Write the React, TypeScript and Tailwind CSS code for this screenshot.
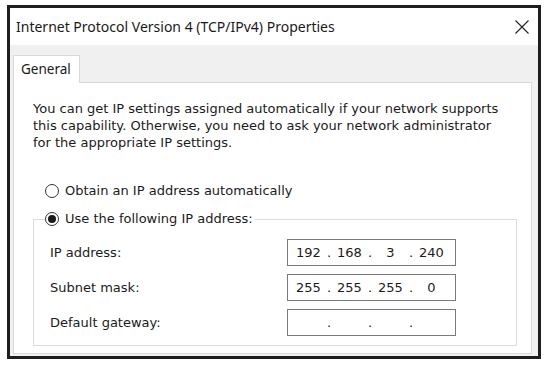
import React from "react";

type Octets = [string, string, string, string];

// Windows-style radio button.
function Radio({ checked, label }: { checked?: boolean; label: string }) {
  return (
    <div className="flex items-center h-[20px]">
      <span className="flex items-center justify-center w-[14px] h-[14px] rounded-full border border-[#333333] bg-white">
        {checked && <span className="w-[8px] h-[8px] rounded-full bg-[#1a1a1a]" />}
      </span>
      <span className="ml-[6px] text-[13px] text-[#1b1b1b]">{label}</span>
    </div>
  );
}

// IP address control: four centred octet fields split by dots.
function IpBox({ value }: { value: Octets }) {
  return (
    <div className="flex items-center w-[169px] h-[27px] border border-[#7a7a7a] bg-white pl-[2px] text-[13px] text-[#1b1b1b]">
      {value.map((o, i) => (
        <React.Fragment key={i}>
          <span className="w-[37px] text-center">{o}</span>
          {i < 3 && <span className="w-[4px] text-center">.</span>}
        </React.Fragment>
      ))}
    </div>
  );
}

function Row({ label, value }: { label: string; value: Octets }) {
  return (
    <div className="flex items-center">
      <span className="w-[253px] pl-[16px] text-[13px] text-[#1b1b1b]">{label}</span>
      <IpBox value={value} />
    </div>
  );
}

export default function App() {
  return (
    <div
      className="w-[553px] h-[366px] bg-white overflow-hidden pt-[5px] pl-[7px]"
      style={{ fontFamily: '"DejaVu Sans", Tahoma, sans-serif' }}
    >
      <div className="w-[534px] h-[354px] border-[3px] border-[#1e1e1e] bg-[#f0f0f0] flex flex-col">
        {/* title bar */}
        <div className="h-[37px] bg-white flex items-center justify-between pl-[6px] pr-[9px] shrink-0">
          <span
            className="text-[14px] text-[#1a1a1a]"
            style={{ fontFamily: '"Noto Sans", "Open Sans", sans-serif' }}
          >
            Internet Protocol Version 4 (TCP/IPv4) Properties
          </span>
          <svg width="14" height="14" viewBox="0 0 14 14" className="mt-[1px]">
            <path d="M0.5 0.5 L13.5 13.5 M13.5 0.5 L0.5 13.5" stroke="#222" strokeWidth="1.1" fill="none" />
          </svg>
        </div>

        {/* tab strip */}
        <div className="pt-[10px] pl-[3px] shrink-0 flex">
          <div
            className="w-[67px] h-[28px] bg-white border border-b-0 border-[#d9d9d9] flex items-center pl-[7px] text-[13.5px] text-[#1a1a1a] -mb-px relative"
            style={{ fontFamily: '"Noto Sans", "Open Sans", sans-serif' }}
          >
            General
          </div>
        </div>

        {/* tab page */}
        <div className="flex-1 ml-[3px] mr-[6px] mb-[2px] bg-white border border-[#d9d9d9] pt-[17px]">
          <p className="pl-[19px] text-[13px] leading-[17px] text-[#1b1b1b]">
            You can get IP settings assigned automatically if your network supports
            <br />
            this capability. Otherwise, you need to ask your network administrator
            <br />
            for the appropriate IP settings.
          </p>

          <div className="pl-[31px] mt-[30px]">
            <Radio label="Obtain an IP address automatically" />
          </div>

          <fieldset className="ml-[19px] mt-[8px] w-[484px] border border-[#dcdcdc] pb-[9px]">
            <legend className="ml-[11px] pr-[2px]">
              <Radio checked label="Use the following IP address:" />
            </legend>
            <div className="flex flex-col gap-[8px] pt-[10px]">
              <Row label="IP address:" value={["192", "168", "3", "240"]} />
              <Row label="Subnet mask:" value={["255", "255", "255", "0"]} />
              <Row label="Default gateway:" value={["", "", "", ""]} />
            </div>
          </fieldset>
        </div>
      </div>
    </div>
  );
}
